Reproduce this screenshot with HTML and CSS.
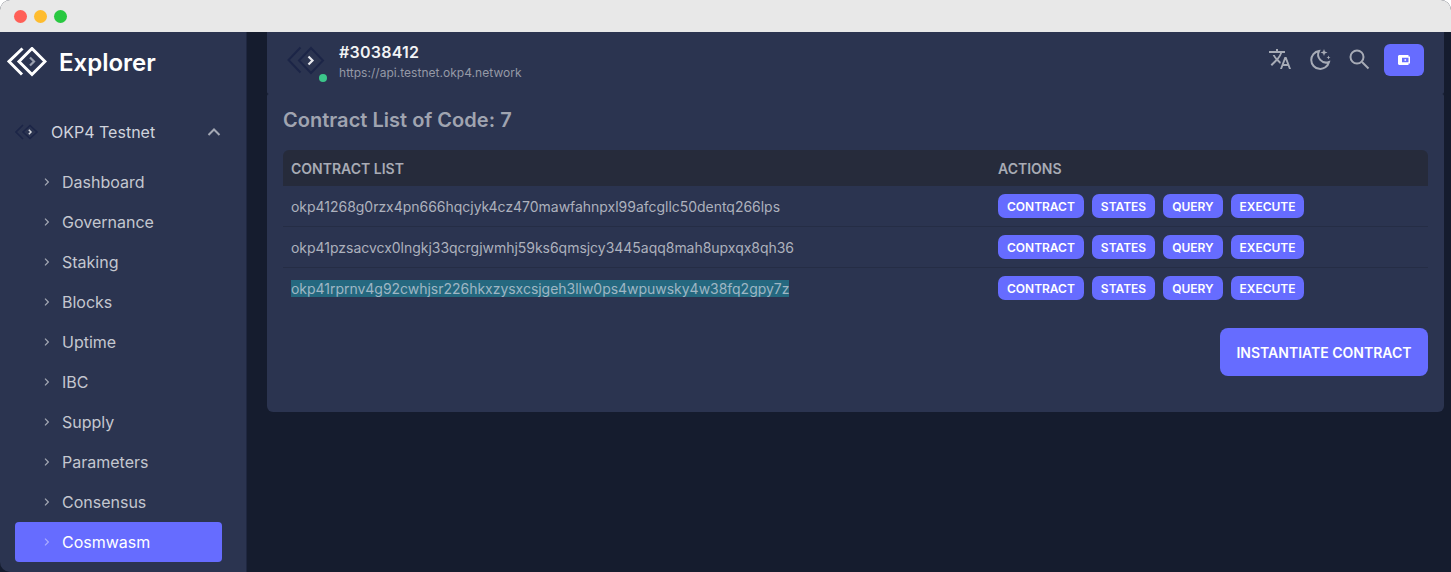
FILE: index.html
```html
<!DOCTYPE html>
<html lang="en">
<head>
<meta charset="utf-8">
<title>Explorer</title>
<link rel="stylesheet" href="styles.css">
</head>
<body>
<div class="window">
  <div class="titlebar">
    <span class="light red"></span><span class="light yellow"></span><span class="light green"></span>
  </div>
  <div class="app">
    <aside class="sidebar">
      <div class="brand">
        <svg class="brand-logo" viewBox="0 0 40 30" fill="none" stroke="#fff" stroke-width="3">
          <path d="M15.500 1.500 L2 14.500 L15 27.500"/>
          <path d="M25 1.500 L38 14.500 L25 27.500 L12 14.500 Z"/>
          <path d="M23 10.500 L27 14.500 L23 18.500" stroke="#9aa0ae" stroke-width="2.200"/>
        </svg>
        <span class="brand-name">Explorer</span>
      </div>
      <div class="chain">
        <svg class="chain-logo" viewBox="0 0 24 16" fill="none" stroke="#1c2547" stroke-width="1.600">
          <path d="M8 1 L1 8 L8 15"/>
          <path d="M15 1.500 L22 8 L15 14.500 L8 8 Z"/>
          <path d="M13.800 5.800 L16 8 L13.800 10.200" stroke="#d5d7dd" stroke-width="1.500"/>
        </svg>
        <span class="chain-name">OKP4 Testnet</span>
        <svg class="chain-caret" viewBox="0 0 14 8" fill="none" stroke="#a4a8b4" stroke-width="2"><path d="M1.500 7 L7 1.500 L12.500 7"/></svg>
      </div>
      <nav class="nav">
        <a class="nav-item"><svg class="nav-chev" viewBox="0 0 5 8" fill="none"><path d="M1 .7 L4.300 4 L1 7.300"/></svg>Dashboard</a>
        <a class="nav-item"><svg class="nav-chev" viewBox="0 0 5 8" fill="none"><path d="M1 .7 L4.300 4 L1 7.300"/></svg>Governance</a>
        <a class="nav-item"><svg class="nav-chev" viewBox="0 0 5 8" fill="none"><path d="M1 .7 L4.300 4 L1 7.300"/></svg>Staking</a>
        <a class="nav-item"><svg class="nav-chev" viewBox="0 0 5 8" fill="none"><path d="M1 .7 L4.300 4 L1 7.300"/></svg>Blocks</a>
        <a class="nav-item"><svg class="nav-chev" viewBox="0 0 5 8" fill="none"><path d="M1 .7 L4.300 4 L1 7.300"/></svg>Uptime</a>
        <a class="nav-item"><svg class="nav-chev" viewBox="0 0 5 8" fill="none"><path d="M1 .7 L4.300 4 L1 7.300"/></svg>IBC</a>
        <a class="nav-item"><svg class="nav-chev" viewBox="0 0 5 8" fill="none"><path d="M1 .7 L4.300 4 L1 7.300"/></svg>Supply</a>
        <a class="nav-item"><svg class="nav-chev" viewBox="0 0 5 8" fill="none"><path d="M1 .7 L4.300 4 L1 7.300"/></svg>Parameters</a>
        <a class="nav-item"><svg class="nav-chev" viewBox="0 0 5 8" fill="none"><path d="M1 .7 L4.300 4 L1 7.300"/></svg>Consensus</a>
        <a class="nav-item active"><svg class="nav-chev" viewBox="0 0 5 8" fill="none"><path d="M1 .7 L4.300 4 L1 7.300"/></svg>Cosmwasm</a>
      </nav>
    </aside>
    <main class="main">
      <header class="topbar">
        <div class="node-logo">
          <svg class="node-svg" viewBox="0 0 36 28" fill="none" stroke="#1c2547" stroke-width="2">
            <path d="M13.500 1.500 L1.500 14 L13.500 26.500"/>
            <path d="M24 2 L36 14.500 L24 27 L12 14.500 Z"/>
            <path d="M21.500 10.500 L25.500 14.500 L21.500 18.500" stroke="#e8e9ee" stroke-width="2.200"/>
          </svg>
          <span class="node-dot"></span>
        </div>
        <div class="node-info">
          <div class="node-height">#3038412</div>
          <div class="node-url">https://api.testnet.okp4.network</div>
        </div>
        <div class="tools">
          <svg class="tool" viewBox="0 0 24 24" fill="#a7abb6"><path d="M12.870 15.070l-2.540-2.510.030-.030A17.520 17.520 0 0 0 14.070 6H17V4h-7V2H8v2H1v2h11.170C11.500 7.920 10.440 9.750 9 11.350 8.070 10.320 7.300 9.190 6.690 8h-2c.73 1.630 1.730 3.170 2.980 4.560l-5.090 5.020L4 19l5-5 3.110 3.110.76-2.040zM18.500 10h-2L12 22h2l1.120-3h4.750L21 22h2l-4.500-12zm-2.620 7l1.620-4.330L19.120 17h-3.240z"/></svg>
          <svg class="tool" viewBox="0 0 24 24" fill="none" stroke="#a7abb6" stroke-width="2"><path d="M11 4 A9 9 0 1 0 21 15 A8 8 0 0 1 11 4 Z"/><path d="M16 2 l.9 2.600 2.600.9-2.600.9-.9 2.600-.9-2.600-2.600-.9 2.600-.9z" fill="#a7abb6" stroke="none"/><path d="M20.500 8.500 l.6 1.400 1.400.6-1.400.6-.6 1.400-.6-1.400-1.400-.6 1.400-.6z" fill="#a7abb6" stroke="none"/></svg>
          <svg class="tool" viewBox="0 0 24 24" fill="none" stroke="#a7abb6" stroke-width="2"><circle cx="10" cy="10" r="6.500"/><path d="M15 15 L21.500 21.500"/></svg>
          <button class="wallet"><svg class="wallet-icon" viewBox="0 0 12 10"><path fill="#fff" fill-rule="evenodd" d="M1.500 0H10.500V1.500H12V8.500H10.500V10H1.500C.7 10 0 9.300 0 8.500V1.500C0 .7.700 0 1.500 0zM4 2.800V7.200H10.500V2.800zM6.500 4.200h1.600v1.600H6.500z"/></svg></button>
        </div>
      </header>
      <section class="card">
        <h2 class="card-title">Contract List of Code: 7</h2>
        <div class="table">
          <div class="row head"><div class="col-addr">CONTRACT LIST</div><div class="col-act">ACTIONS</div></div>
          <div class="row">
            <div class="col-addr">okp41268g0rzx4pn666hqcjyk4cz470mawfahnpxl99afcgllc50dentq266lps</div>
            <div class="col-act"><button class="pill">CONTRACT</button><button class="pill">STATES</button><button class="pill">QUERY</button><button class="pill">EXECUTE</button></div>
          </div>
          <div class="row">
            <div class="col-addr">okp41pzsacvcx0lngkj33qcrgjwmhj59ks6qmsjcy3445aqq8mah8upxqx8qh36</div>
            <div class="col-act"><button class="pill">CONTRACT</button><button class="pill">STATES</button><button class="pill">QUERY</button><button class="pill">EXECUTE</button></div>
          </div>
          <div class="row last">
            <div class="col-addr"><span class="selected">okp41rprnv4g92cwhjsr226hkxzysxcsjgeh3llw0ps4wpuwsky4w38fq2gpy7z</span></div>
            <div class="col-act"><button class="pill">CONTRACT</button><button class="pill">STATES</button><button class="pill">QUERY</button><button class="pill">EXECUTE</button></div>
          </div>
        </div>
        <div class="card-actions"><button class="primary">INSTANTIATE CONTRACT</button></div>
      </section>
    </main>
  </div>
</div>
</body>
</html>
```
FILE: styles.css
```css
* { box-sizing: border-box; }
html, body { margin: 0; height: 100%; background: #fff; overflow: hidden; }
body { font-family: Inter, "Liberation Sans", sans-serif; color: #c4c7cf; }
button { font-family: inherit; border: 0; cursor: pointer; }

.window { height: 572px; display: flex; flex-direction: column; border-radius: 10px 10px 0 0; overflow: hidden; background: #151c2e; }
.titlebar { height: 32px; flex: none; background: #e8e8e8; display: flex; align-items: center; gap: 7px; padding: 1px 0 0 13.500px; }
.light { width: 13px; height: 13px; border-radius: 50%; }
.red { background: #ff5f57; }
.yellow { background: #febc2e; }
.green { background: #28c840; }

.app { flex: 1; display: flex; min-height: 0; }
.sidebar { width: 247px; flex: none; background: #2b3450; border-right: 1px solid #1f2740; border-bottom-left-radius: 10px; overflow: hidden; }
.brand { height: 60px; display: flex; align-items: center; padding-left: 7px; }
.brand-logo { width: 40px; height: 30px; flex: none; }
.brand-name { margin-left: 12px; padding-top: 2px; font-size: 24px; font-weight: 600; color: #fff; line-height: 30px; }

.chain { height: 40px; margin-top: 20px; margin-bottom: 10px; display: flex; align-items: center; padding-left: 15px; }
.chain-logo { width: 24px; height: 16px; flex: none; }
.chain-name { margin-left: 12px; font-size: 16px; color: #d0d3dc; }
.chain-caret { width: 14px; height: 8px; margin-left: auto; margin-right: 25px; }

.nav { display: flex; flex-direction: column; }
.nav-item { height: 40px; width: 207px; margin-left: 15px; display: flex; align-items: center; padding-left: 29px; font-size: 16px; color: #c4c7cf; border-radius: 4px; }
.nav-chev { width: 5px; height: 8px; margin-right: 13px; flex: none; }
.nav-chev path { stroke: #a4a8b4; stroke-width: 1.200; }
.nav-item.active { background: #666cff; color: #fff; }
.nav-item.active .nav-chev path { stroke: #a9acff; }

.main { flex: 1; min-width: 0; padding: 0 7px 0 20px; }
.topbar { height: 62px; background: #2b3450; border-radius: 0 0 2px 2px; display: flex; align-items: center; padding: 0 20px; }
.node-logo { position: relative; width: 36px; height: 28px; margin-right: 16px; margin-top: -6px; }
.node-svg { display: block; width: 36px; height: 28px; overflow: visible; }
.node-dot { position: absolute; left: 32px; top: 28px; width: 8px; height: 8px; border-radius: 50%; background: #3cc68a; }
.node-info { display: flex; flex-direction: column; padding-bottom: 3px; }
.node-height { font-size: 16px; font-weight: 600; color: #f2f3f5; line-height: 22px; letter-spacing: .25px; }
.node-url { font-size: 12px; color: #9599a6; line-height: 18px; margin-top: 1px; letter-spacing: .03px; }
.tools { margin-left: auto; margin-bottom: 6px; display: flex; align-items: center; gap: 15.500px; }
.tool { width: 24px; height: 24px; margin-bottom: 2px; }
.wallet { width: 40px; height: 32px; background: #666cff; border-radius: 6px; display: flex; align-items: center; justify-content: center; padding: 0; margin-left: -2.500px; }
.wallet-icon { width: 12px; height: 10px; }

.card { height: 318px; background: #2b3450; border-radius: 2px 2px 6px 6px; padding: 14px 16px 0; }
.card-title { margin: 0; font-size: 20px; font-weight: 600; line-height: 24px; color: #a0a4b0; letter-spacing: .03px; }
.table { margin-top: 18px; }
.row { height: 41px; display: flex; align-items: center; font-size: 14px; color: #adb1bd; border-bottom: 1px solid #252d45; letter-spacing: -.025px; }
.row.last { border-bottom-color: transparent; }
.row.head { height: 36px; background: #262b3b; border: 0; border-radius: 6px 6px 0 0; font-size: 14px; font-weight: 600; color: #a8abb5; letter-spacing: 0; }
.col-addr { width: 707px; padding-left: 8px; flex: none; white-space: nowrap; }
.col-act { display: flex; gap: 8px; padding-left: 8px; }
.selected { background: #25687f; color: #9fb6c4; }
.pill { height: 24px; padding: 0 9px; border-radius: 7px; background: #666cff; color: #fff; font-size: 12px; font-weight: 600; letter-spacing: -.012px; }
.card-actions { display: flex; justify-content: flex-end; margin-top: 19px; }
.primary { height: 48px; width: 208px; border-radius: 8px; background: #666cff; color: #fff; font-size: 14px; font-weight: 600; }
```
